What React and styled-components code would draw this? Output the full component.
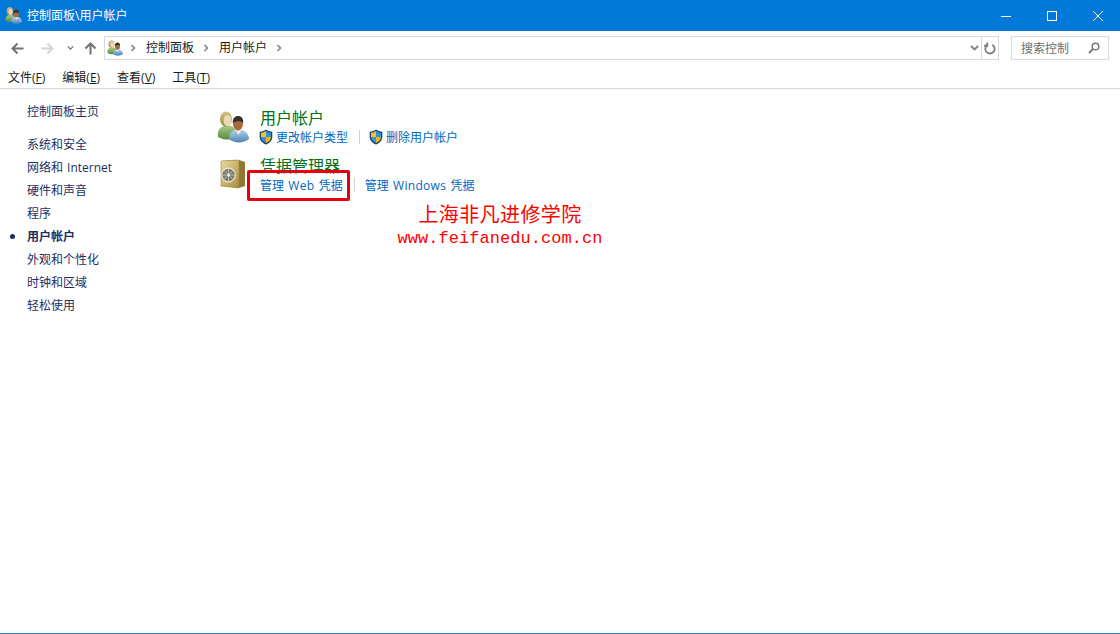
import React from 'react'
import styled, { createGlobalStyle } from 'styled-components'

const FONT = '"Open Sans", "Noto Sans CJK SC", sans-serif'

const GlobalStyle = createGlobalStyle`
  html, body {
    margin: 0;
    padding: 0;
    height: 100%;
    background: #fff;
    overflow: hidden;
  }
  body {
    font-family: ${FONT};
    font-size: 12px;
  }
`

const Window = styled.div`
  position: relative;
  width: 1120px;
  height: 634px;
  display: flex;
  flex-direction: column;
  box-sizing: border-box;
  border-bottom: 1px solid #2b84cf;
  overflow: hidden;
`

const TitleBar = styled.header`
  height: 31px;
  flex: none;
  display: flex;
  align-items: center;
  background: #0078d7;
  color: #fff;
  padding-left: 5px;
`

const TitleText = styled.span`
  margin-left: 5px;
  flex: 1;
  line-height: 31px;
`

const WinButton = styled.div`
  width: 46px;
  height: 31px;
  flex: none;
  display: flex;
  align-items: center;
  justify-content: center;
  margin-right: ${p => p.$end || 0}px;
`

const NavBar = styled.nav`
  height: 34px;
  flex: none;
  display: flex;
  align-items: center;
  padding: 0 11px;
`

const NavIcon = styled.span`
  display: flex;
  width: ${p => p.$w}px;
  margin-right: ${p => p.$gap}px;
  color: ${p => (p.$off ? '#d4d4d4' : '#727272')};
`

const AddressBox = styled.div`
  width: 895px;
  height: 24px;
  box-sizing: border-box;
  border: 1px solid #d9d9d9;
  display: flex;
  align-items: center;
  padding-left: 2px;
  color: #1a1a1a;
`

const Crumb = styled.span`
  margin: 0 8px 0 9px;
  line-height: 22px;
`

const CrumbArrow = styled.span`
  display: flex;
  margin-left: ${p => (p.$first ? 6 : 0)}px;
  color: #808080;
`

const AddressEnd = styled.div`
  margin-left: auto;
  display: flex;
  align-items: center;
  height: 100%;
  color: #808080;
`

const RefreshCell = styled.span`
  width: 16px;
  height: 100%;
  margin-left: 2px;
  border-left: 1px solid #d9d9d9;
  display: flex;
  align-items: center;
  justify-content: center;
`

const SearchBox = styled.div`
  width: 98px;
  height: 24px;
  box-sizing: border-box;
  margin-left: 12px;
  border: 1px solid #d9d9d9;
  display: flex;
  align-items: center;
  justify-content: space-between;
  padding: 0 8px 0 9px;
  color: #6d6d6d;
`

const MenuBar = styled.div`
  height: 24px;
  flex: none;
  display: flex;
  align-items: center;
  gap: 17px;
  padding: 2px 0 0 8px;
  border-bottom: 1px solid #d9d9d9;
  color: #1a1a1a;
  box-sizing: border-box;
`

const MenuItem = styled.span`
  line-height: 20px;
  u { text-underline-offset: 1px; }
`

const Content = styled.div`
  flex: 1;
  display: flex;
`

const Sidebar = styled.aside`
  width: 217px;
  flex: none;
  box-sizing: border-box;
  padding: 11px 0 0 27px;
`

const SideItem = styled.div`
  position: relative;
  height: 23px;
  line-height: 23px;
  color: #1c2f63;
  word-spacing: 1px;
  font-weight: ${p => (p.$active ? 700 : 400)};
  margin-bottom: ${p => p.$gap || 0}px;

  ${p => p.$active && `
    &::before {
      content: '';
      position: absolute;
      left: -17px;
      top: 9px;
      width: 5px;
      height: 5px;
      border-radius: 50%;
      background: #1c2f63;
    }
  `}
`

const Main = styled.main`
  padding-top: 18px;
  display: flex;
  flex-direction: column;
  gap: 4px;
`

const Group = styled.section`
  display: flex;
  align-items: flex-start;
`

const GroupIcon = styled.div`
  width: 43px;
  height: 44px;
  flex: none;
  display: flex;
  padding-top: 4px;
  padding-left: ${p => p.$pad || 0}px;
  box-sizing: border-box;
`

const GroupBody = styled.div`
  display: flex;
  flex-direction: column;
`

const Heading = styled.h2`
  margin: 0;
  font-size: 16px;
  font-weight: 400;
  line-height: 22px;
  color: #00701a;
`

const LinkRow = styled.div`
  display: flex;
  align-items: center;
  height: 16px;
  margin-left: ${p => p.$left || 0}px;
`

const TaskLink = styled.a`
  display: flex;
  align-items: center;
  color: #0067c0;
  white-space: pre;
  word-spacing: 1.2px;
  cursor: pointer;
  svg { margin-right: 3px; }
`

const Latin = styled.span`
  letter-spacing: 0.3px;
`

const Divider = styled.span`
  width: 1px;
  height: 14px;
  background: #d0d0d0;
  margin: 0 ${p => p.$right}px 0 11px;
`

const RedFrame = styled.div`
  position: absolute;
  left: 247px;
  top: 170px;
  width: 103px;
  height: 31px;
  box-sizing: border-box;
  border: 3px solid #e6000f;
  border-radius: 2px;
`

const Stamp = styled.div`
  position: absolute;
  left: 380px;
  top: 200px;
  width: 240px;
  text-align: center;
  color: #f00;
`

const StampName = styled.div`
  font-family: "Noto Sans CJK SC", sans-serif;
  font-size: 20px;
  letter-spacing: 0.4px;
  line-height: 27px;
`

const StampUrl = styled.div`
  font-family: "Liberation Mono", monospace;
  font-size: 17px;
  letter-spacing: 0.05px;
  line-height: 24px;
`

const Chevron = ({ size = 8 }) => (
  <svg width={size} height={size} viewBox="0 0 8 8" fill="none" stroke="currentColor" strokeWidth="1.5">
    <path d="M2.5 1 L5.5 4 L2.5 7" />
  </svg>
)

const ChevronDown = ({ w = 9, sw = 1.5 }) => (
  <svg width={w} height="6" viewBox="0 0 9 6" fill="none" stroke="currentColor" strokeWidth={sw}>
    <path d="M1 1 L4.5 4.5 L8 1" />
  </svg>
)

const Arrow = ({ rotate = 0 }) => (
  <svg
    width="13"
    height="13"
    viewBox="0 0 13 13"
    fill="none"
    stroke="currentColor"
    strokeWidth="2"
    style={{ transform: `rotate(${rotate}deg)` }}
  >
    <path d="M1.5 6.5 H12.5 M6.5 1.5 L1.5 6.5 L6.5 11.5" />
  </svg>
)

const Shield = () => (
  <svg width="14" height="16" viewBox="0 0 14 16">
    <path d="M7 .5 C5 2 3 2.6.7 2.7 V8 C.7 11.5 3.5 14 7 15.5 C10.5 14 13.3 11.5 13.3 8 V2.7 C11 2.6 9 2 7 .5 Z" fill="#1f3f73" />
    <path d="M7 2 V8 H2 V3.8 C3.8 3.6 5.5 3 7 2 Z" fill="#f8c11d" />
    <path d="M7 2 C8.5 3 10.2 3.6 12 3.8 V8 H7 Z" fill="#2f8fe0" />
    <path d="M2 8 H7 V14 C4.5 12.8 2 11 2 8 Z" fill="#3a93e2" />
    <path d="M7 8 H12 C12 11 9.5 12.8 7 14 Z" fill="#f6b612" />
  </svg>
)

// two-person account glyph, scales for the title, address bar and the section head
const UsersIcon = ({ size = 16 }) => (
  <svg width={size} height={size} viewBox="0 0 32 32">
    <defs>
      <linearGradient id="hairA" x1="0" y1="0" x2="0" y2="1">
        <stop offset="0" stopColor="#d8c27c" />
        <stop offset="1" stopColor="#8f8a45" />
      </linearGradient>
      <linearGradient id="shirtA" x1="0" y1="0" x2="0" y2="1">
        <stop offset="0" stopColor="#a8cb84" />
        <stop offset="1" stopColor="#57893f" />
      </linearGradient>
      <linearGradient id="shirtB" x1="0" y1="0" x2="0" y2="1">
        <stop offset="0" stopColor="#b2d2ec" />
        <stop offset="1" stopColor="#4f83b4" />
      </linearGradient>
    </defs>
    <path d="M1 26 C0 20 3 16 7 15 H14 C18 16 19 20 19 27 C13 29.500 6 29 1 26 Z" fill="url(#shirtA)" />
    <ellipse cx="9" cy="8" rx="6" ry="7.500" fill="url(#hairA)" />
    <ellipse cx="10.500" cy="9.500" rx="4" ry="5.500" fill="#efd6b4" />
    <path d="M12 28 C12 23 14 20 18 19 H25 C29 20 32 24 32 28 C27 32.500 17 32.500 12 28 Z" fill="url(#shirtB)" />
    <path d="M18.500 19 L21.500 24 L24.500 19 Z" fill="#e9eef2" />
    <ellipse cx="21" cy="13" rx="5" ry="6.500" fill="#a9683f" />
    <path d="M15.800 12 C15.600 7 18 5 21 5 C24.500 5 26.500 7.500 26.200 12 C24.500 9.500 19 9.500 15.800 12 Z" fill="#38302a" />
  </svg>
)

const SafeIcon = () => (
  <svg width="26" height="30" viewBox="0 0 26 30">
    <defs>
      <linearGradient id="safeFront" x1="0" y1="0" x2="1" y2="1">
        <stop offset="0" stopColor="#efdc9c" />
        <stop offset="1" stopColor="#a88c40" />
      </linearGradient>
    </defs>
    <path d="M1 2 L19 1 L25 3 V27 L19 29 L1 27 Z" fill="#8f7836" />
    <path d="M1 2 L19 1 V29 L1 27 Z" fill="url(#safeFront)" stroke="#a08838" strokeWidth=".6" />
    <circle cx="8.500" cy="16" r="6.800" fill="#77776e" stroke="#ece8d6" strokeWidth="1.200" />
    <path d="M8.500 10 V22 M2.500 16 H14.500 M4.300 11.800 L12.700 20.200 M12.700 11.800 L4.300 20.200" stroke="#c8c5b6" strokeWidth="1" />
    <circle cx="8.500" cy="16" r="2.200" fill="#e8e4d0" stroke="#66665e" strokeWidth=".6" />
  </svg>
)

const sideLinks = ['系统和安全', '网络和 Internet', '硬件和声音', '程序', '用户帐户', '外观和个性化', '时钟和区域', '轻松使用']
const menus = [['文件', 'F'], ['编辑', 'E'], ['查看', 'V'], ['工具', 'T']]

export default function App() {
  return (
    <Window>
      <GlobalStyle />
      <TitleBar>
        <UsersIcon size={17} />
        <TitleText>控制面板\用户帐户</TitleText>
        <WinButton>
          <svg width="10" height="10" viewBox="0 0 10 10" stroke="#fff" fill="none"><path d="M0 5.500 H10" /></svg>
        </WinButton>
        <WinButton>
          <svg width="10" height="10" viewBox="0 0 10 10" stroke="#fff" fill="none"><rect x=".5" y=".5" width="9" height="9" /></svg>
        </WinButton>
        <WinButton $end={-1}>
          <svg width="10" height="10" viewBox="0 0 10 10" stroke="#fff" fill="none"><path d="M0 0 L10 10 M10 0 L0 10" /></svg>
        </WinButton>
      </TitleBar>

      <NavBar>
        <NavIcon $w={13} $gap={17}><Arrow /></NavIcon>
        <NavIcon $w={13} $gap={13} $off><Arrow rotate={180} /></NavIcon>
        <NavIcon $w={7} $gap={10}><ChevronDown w={7} /></NavIcon>
        <NavIcon $w={13} $gap={7}><Arrow rotate={90} /></NavIcon>
        <AddressBox>
          <UsersIcon size={16} />
          <CrumbArrow $first><Chevron /></CrumbArrow>
          <Crumb>控制面板</Crumb>
          <CrumbArrow><Chevron /></CrumbArrow>
          <Crumb>用户帐户</Crumb>
          <CrumbArrow><Chevron /></CrumbArrow>
          <AddressEnd>
            <ChevronDown w={9} sw={1.8} />
            <RefreshCell>
              <svg width="12" height="13" viewBox="0 0 11 12" fill="none" stroke="currentColor" strokeWidth="1.700">
                <path d="M7.500 2.500 A4.300 4.300 0 1 1 3 2.800" />
                <path d="M3 .5 V3.500 H0" />
              </svg>
            </RefreshCell>
          </AddressEnd>
        </AddressBox>
        <SearchBox>
          <span>搜索控制</span>
          <svg width="12" height="12" viewBox="0 0 12 12" fill="none" stroke="#7a7a7a">
            <circle cx="7.500" cy="4.500" r="3.300" strokeWidth="1.500" />
            <path d="M5 7 L1 11" strokeWidth="2" />
          </svg>
        </SearchBox>
      </NavBar>

      <MenuBar>
        {menus.map(([name, key]) => (
          <MenuItem key={key}>{name}(<u>{key}</u>)</MenuItem>
        ))}
      </MenuBar>

      <Content>
        <Sidebar>
          <SideItem $gap={10}>控制面板主页</SideItem>
          {sideLinks.map(text => (
            <SideItem key={text} $active={text === '用户帐户'}>{text}</SideItem>
          ))}
        </Sidebar>
        <Main>
          <Group>
            <GroupIcon><UsersIcon size={32} /></GroupIcon>
            <GroupBody>
              <Heading>用户帐户</Heading>
              <LinkRow $left={-1}>
                <TaskLink><Shield />更改帐户类型</TaskLink>
                <Divider $right={9} />
                <TaskLink><Shield />删除用户帐户</TaskLink>
              </LinkRow>
            </GroupBody>
          </Group>
          <Group>
            <GroupIcon $pad={3}><SafeIcon /></GroupIcon>
            <GroupBody>
              <Heading>凭据管理器</Heading>
              <LinkRow>
                <TaskLink>管理 <Latin>Web</Latin> 凭据</TaskLink>
                <Divider $right={10} />
                <TaskLink>管理 <Latin>Windows</Latin> 凭据</TaskLink>
              </LinkRow>
            </GroupBody>
          </Group>
        </Main>
      </Content>

      <RedFrame />
      <Stamp>
        <StampName>上海非凡进修学院</StampName>
        <StampUrl>www.feifanedu.com.cn</StampUrl>
      </Stamp>
    </Window>
  )
}
